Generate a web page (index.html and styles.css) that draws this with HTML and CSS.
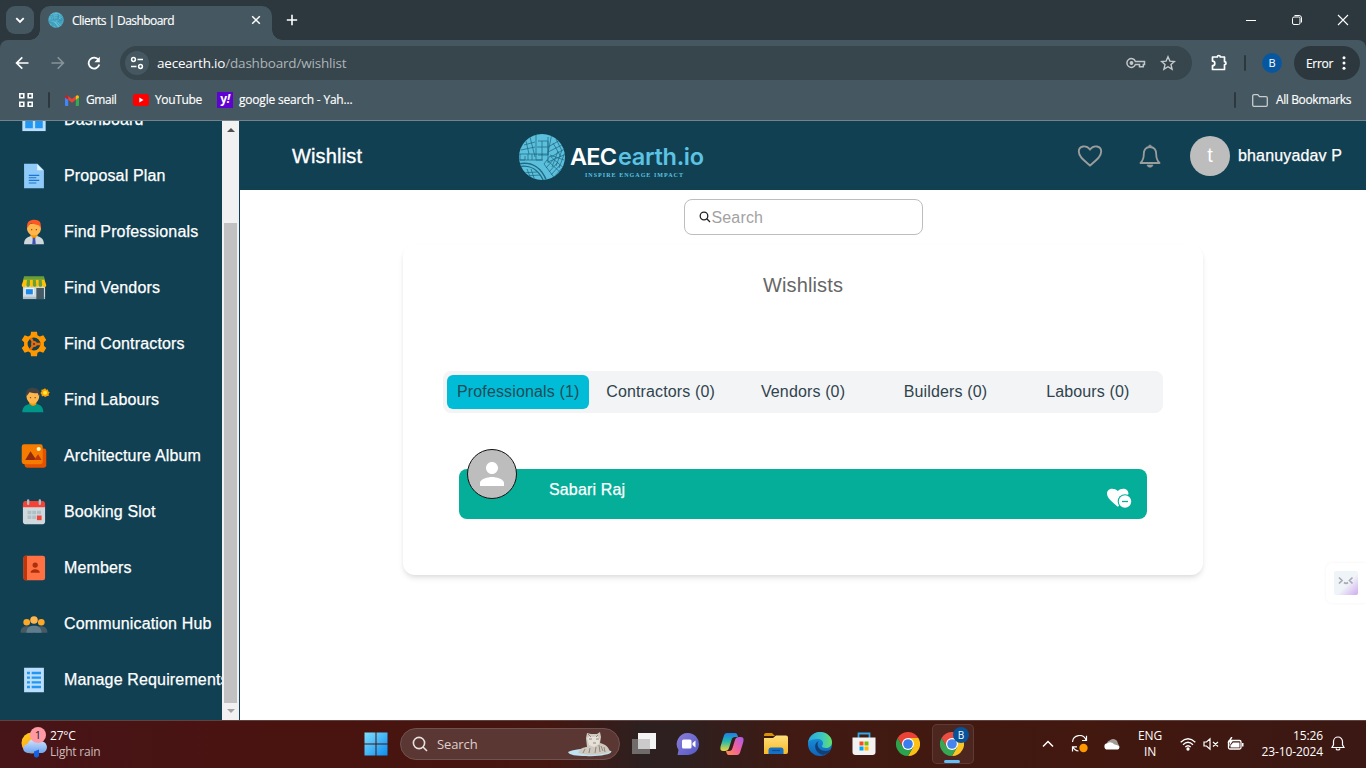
FILE: index.html
```html
<!DOCTYPE html>
<html lang="en">
<head>
<meta charset="utf-8">
<title>Clients | Dashboard</title>
<link rel="stylesheet" href="styles.css">
</head>
<body>
<svg width="0" height="0" class="defs">
  <defs>
    <clipPath id="globe"><circle cx="24" cy="24" r="23"/></clipPath>
    <symbol id="earth" viewBox="0 0 48 48">
      <g clip-path="url(#globe)">
        <rect width="48" height="48" fill="#5cc0dc"/>
        <g stroke="#1f6a84" fill="none" stroke-width=".75">
          <path d="M18 0v22M20 8h10v14H20M24 8v14M30 4v26M12 4l5 20M6 12l11-3M3 17l14-3M19 14h11M1 21h30M2 21v6h5v-4M10 21v6M14 21v6M18 21v6h6v-6M1 27h24M8 8l3 13M34 0l-4 20M30 14l14-8M30 19l18-9M33 24l15-9M30 29l18-8M38 6l6 12M35 10l8 14"/>
          <path d="M0 31c14-3 24 4 29 18M0 34c12-3 21 3 26 15" stroke-width="1.4"/>
          <path d="M26 31l6-8 16 14M28 35l8-9M31 39l9-10M33 42l9-10M36 44l9-10M29 27l15 14M26 31l12 16M4 37l5 7M9 36l4 10M13 36l4 12M3 40l16-1M7 43l15-1M32 22l14 5M40 18l-6 16M44 17l-6 16M47 19l-6 16"/>
        </g>
      </g>
    </symbol>
    <symbol id="chrome" viewBox="0 0 24 24">
      <path d="M12 6h10.4A12 12 0 0 0 1.6 6l5.2 9z" fill="#ea4335"/>
      <path d="M17.2 15 12 24A12 12 0 0 0 22.4 6H12z" fill="#fbc116"/>
      <path d="M6.8 15 1.6 6A12 12 0 0 0 12 24l5.2-9z" fill="#2ba24c"/>
      <circle cx="12" cy="12" r="6" fill="#fff"/><circle cx="12" cy="12" r="4.8" fill="#3b7ded"/>
    </symbol>
    <linearGradient id="win" x1="0" y1="0" x2="1" y2="1"><stop offset="0" stop-color="#7fe0ff"/><stop offset="1" stop-color="#0a8cf0"/></linearGradient>
    <linearGradient id="sun" x1="0" y1="0" x2="1" y2="1"><stop offset="0" stop-color="#ffd21e"/><stop offset="1" stop-color="#ff8a10"/></linearGradient>
    <linearGradient id="cloud" x1="0" y1="0" x2="0" y2="1"><stop offset="0" stop-color="#d3e4fd"/><stop offset="1" stop-color="#6fa5ee"/></linearGradient>
    <linearGradient id="fold" x1="0" y1="0" x2="0" y2="1"><stop offset="0" stop-color="#ffe07a"/><stop offset="1" stop-color="#f8b928"/></linearGradient>
    <linearGradient id="chat" x1="0" y1="0" x2="1" y2="1"><stop offset="0" stop-color="#8b7fd8"/><stop offset="1" stop-color="#5558c8"/></linearGradient>
    <linearGradient id="edgeA" x1="0" y1="0" x2="1" y2="0"><stop offset="0" stop-color="#2aa5dd"/><stop offset=".6" stop-color="#3cc8c0"/><stop offset="1" stop-color="#67df62"/></linearGradient>
    <linearGradient id="edgeB" x1="0" y1="0" x2="0" y2="1"><stop offset="0" stop-color="#1b9de2"/><stop offset="1" stop-color="#0f63b9"/></linearGradient>
    <linearGradient id="copA" x1="0" y1="0" x2="0" y2="1"><stop offset="0" stop-color="#1f7ce8"/><stop offset=".45" stop-color="#20b9b0"/><stop offset="1" stop-color="#f2d638"/></linearGradient>
    <linearGradient id="copB" x1="1" y1="0" x2="0" y2="1"><stop offset="0" stop-color="#a45ef0"/><stop offset=".5" stop-color="#f0609e"/><stop offset="1" stop-color="#ff8f4e"/></linearGradient>
  </defs>
</svg>

<div class="tabstrip">
  <div class="tab-search"><svg width="28" height="28" viewBox="0 0 28 28"><path d="M10.300 12.200l3.700 3.700 3.700-3.700" fill="none" stroke="#fff" stroke-width="1.900"/></svg></div>
  <div class="tab">
    <svg width="16" height="16"><use href="#earth"/></svg>
    <span class="tab-title">Clients | Dashboard</span>
    <svg width="10" height="10" viewBox="0 0 10 10"><path d="M1.200 1.200l7.600 7.600M8.800 1.200l-7.600 7.600" stroke="#fff" stroke-width="1.500"/></svg>
  </div>
  <svg class="new-tab" width="12" height="12" viewBox="0 0 12 12"><path d="M6 .8v10.400M.8 6h10.400" stroke="#fff" stroke-width="1.600"/></svg>
  <div class="win-buttons">
    <svg width="12" height="12" viewBox="0 0 12 12"><path d="M1 6.500h10" stroke="#fff"/></svg>
    <svg width="12" height="12" viewBox="0 0 12 12" fill="none" stroke="#fff"><rect x="1.500" y="3" width="7.500" height="7.500" rx="1.500"/><path d="M3.500 1.500H8a2.500 2.500 0 0 1 2.500 2.500v4.500"/></svg>
    <svg width="12" height="12" viewBox="0 0 12 12"><path d="M1 1l10 10M11 1L1 11" stroke="#fff" stroke-width="1.100"/></svg>
  </div>
</div>

<div class="toolbar-back">
<div class="toolbar">
  <div class="nav">
    <svg width="14" height="14" viewBox="0 0 14 14" fill="none" stroke="#fff" stroke-width="1.700"><path d="M13.500 7H2M7.300 1.300L1.600 7l5.700 5.700"/></svg>
    <svg width="14" height="14" viewBox="0 0 14 14" fill="none" stroke="#87949a" stroke-width="1.600"><path d="M.5 7H12M6.700 1.300L12.400 7l-5.700 5.700"/></svg>
    <svg width="14" height="14" viewBox="0 0 14 14"><path d="M11.500 4A5.400 5.400 0 1 0 12.300 8.500" fill="none" stroke="#fff" stroke-width="1.800"/><path d="M12.800.8v5.400H7.400z" fill="#fff"/></svg>
  </div>
  <div class="omnibox">
    <span class="site-info"><svg width="14" height="14" viewBox="0 0 14 14" fill="none" stroke="#fff" stroke-width="1.500"><circle cx="3.500" cy="3.500" r="1.900"/><path d="M7.500 3.500H13M1 10.500h5.500"/><circle cx="10.500" cy="10.500" r="1.900"/></svg></span>
    <span class="url"><b>aecearth.io</b>/dashboard/wishlist</span>
    <svg width="20" height="12" viewBox="0 0 20 12" fill="none" stroke="#c0c6c9" stroke-width="1.500"><path d="M9.400 4.400A4.400 4.400 0 1 0 9.400 7.600H13.500V9.800h3.800V7.600H18.500V4.400z"/><circle cx="5.500" cy="6" r="1.200" fill="#c0c6c9"/></svg>
    <svg class="star" width="16" height="16" viewBox="0 0 16 16" fill="none" stroke="#c5cbcd" stroke-width="1.400"><path d="M8 1.800l1.900 4.300 4.600.4-3.500 3.100 1.100 4.600L8 11.700l-4.100 2.500L5 9.600 1.500 6.500l4.600-.4z"/></svg>
  </div>
  <svg class="ext" width="18" height="18" viewBox="0 0 18 18" fill="none" stroke="#fff" stroke-width="1.700" stroke-linejoin="round"><path d="M2.500 3h4.800a1.500 1.500 0 0 1 3 0H14.500v4.700a1.500 1.500 0 0 1 0 3V15.500H2.500v-3.800a2.300 2.300 0 0 0 0-4.600z"/></svg>
  <i class="sep"></i>
  <span class="profile">B</span>
  <span class="error">Error<svg width="4" height="14" viewBox="0 0 4 14" fill="#fff"><circle cx="2" cy="1.700" r="1.500"/><circle cx="2" cy="7" r="1.500"/><circle cx="2" cy="12.300" r="1.500"/></svg></span>
</div>
</div>

<div class="bookmarks">
  <svg class="apps" width="14" height="14" viewBox="0 0 14 14" fill="none" stroke="#fff" stroke-width="1.600"><path d="M.8.8h4v4h-4zM9.200.8h4v4h-4zM.8 9.200h4v4h-4zM9.200 9.200h4v4h-4z"/></svg>
  <i class="sep"></i>
  <svg class="gm" width="14" height="11" viewBox="0 0 14 11"><path d="M0 2v8.200c0 .5.400.8.800.8H3.200V4.500z" fill="#4285f4"/><path d="M14 2v8.200c0 .5-.4.800-.8.800H10.800V4.500z" fill="#34a853"/><path d="M3.200 4.800V1L7 4l3.800-3v3.800L7 7.700z" fill="#ea4335"/><path d="M0 2.500C0 .5 1.700-.3 3.200 1v3.800L0 2.500z" fill="#c5221f"/><path d="M14 2.500C14 .5 12.300-.3 10.800 1v3.800L14 2.500z" fill="#fbbc04"/></svg>
  <span class="bm bm-gmail">Gmail</span>
  <svg class="yt" width="16" height="12" viewBox="0 0 16 12"><rect width="16" height="12" rx="2.500" fill="#f00"/><path d="M6.300 3.500v5l4.200-2.500z" fill="#fff"/></svg>
  <span class="bm bm-yt">YouTube</span>
  <span class="yahoo">y<em>!</em></span>
  <span class="bm bm-yahoo">google search - Yah...</span>
  <i class="sep sep-right"></i>
  <svg class="folder" width="16" height="13" viewBox="0 0 16 13" fill="none" stroke="#c6cccf" stroke-width="1.300"><path d="M.7 2A1.300 1.300 0 0 1 2 .7h3.800l1.700 2H14A1.300 1.300 0 0 1 15.300 4v7A1.300 1.300 0 0 1 14 12.300H2A1.300 1.300 0 0 1 .7 11z"/></svg>
  <span class="bm bm-all">All Bookmarks</span>
</div>

<div class="page">
  <nav class="sidebar">
    <div class="menu">
      <a class="item"><svg viewBox="0 0 48 48"><path d="M4 5h40v38H4z" fill="#bbdefb"/><path d="M9 9h13v29H9zM26 9h13v29H26z" fill="#2196f3"/></svg>Dashboard</a>
      <a class="item"><svg viewBox="0 0 48 48"><path d="M41 45H7V3h23l11 11z" fill="#90caf9"/><path d="M39.500 14H29.500V4z" fill="#e1f5fe"/><path d="M15 22h18v2H15zM15 26h13v2H15zM15 30.500h18v2H15zM15 35h13v2H15z" fill="#1976d2"/></svg>Proposal Plan</a>
      <a class="item"><svg viewBox="0 0 48 48"><path d="M18 26h12v9l-6 5-6-5z" fill="#ff9800"/><path d="M12 17c0-10 24-10 24 0 0 17-24 17-24 0z" fill="#ffb74d"/><path d="M13 18C10 6 17 3 25 3c10 0 12 7 10 15l-2-5-14-4-4 4z" fill="#ff5722"/><circle cx="20" cy="20" r="1.200" fill="#784719"/><circle cx="28" cy="20" r="1.200" fill="#784719"/><path d="M7 45c0-9 5-12 12-14l5 7 5-7c7 2 12 5 12 14z" fill="#cfd8dc"/><path d="M22 34h4l1 11h-6z" fill="#3f51b5"/></svg>Find Professionals</a>
      <a class="item"><svg viewBox="0 0 48 48"><path d="M5 18h38v22H5z" fill="#cfd8dc"/><path d="M5 39h38v4H5z" fill="#b0bec5"/><path d="M28 24h13v19H28z" fill="#455a64"/><path d="M8 24h16v12H8z" fill="#e3f2fd"/><path d="M10 26h12v9H10z" fill="#1e88e5"/><path d="M7 4h34l2 7H5z" fill="#689f38"/><path d="M6 10h36l3 9c0 5-7 5-7 0 0 5-7 5-7 0 0 5-7 5-7 0 0 5-7 5-7 0 0 5-7 5-7 0 0 5-7 5-7 0z" fill="#ffc107"/><path d="M12 10h5v9c0 4-6 4-6 0zM22 10h5l1 9c0 4-6 4-6 0zM32 10h5l1 9c0 4-6 4-6 0z" fill="#689f38"/></svg>Find Vendors</a>
      <a class="item"><svg viewBox="0 0 48 48"><path fill-rule="evenodd" d="M19 3h10l1 6 4 2 6-2 5 8-4 4v6l4 4-5 8-6-2-4 2-1 6H19l-1-6-4-2-6 2-5-8 4-4v-6l-4-4 5-8 6 2 4-2zM24 13a11 11 0 1 0 0 22 11 11 0 1 0 0-22z" fill="#ff9800"/><path d="M24 24l-5.500-10M24 24h12M24 24l-6.500 10" stroke="#ef6c00" stroke-width="4"/><circle cx="24" cy="24" r="5" fill="#ef6c00"/><circle cx="24" cy="24" r="1.800" fill="#174150"/></svg>Find Contractors</a>
      <a class="item"><svg viewBox="0 0 48 48"><path d="M16 26h12v10H16z" fill="#ff9800"/><path d="M11 16c0-10 22-10 22 0 0 19-22 19-22 0z" fill="#ffb74d"/><path d="M11 18C9 7 14 3 22 3c10 0 13 6 11 15l-3-6c-8 2-12-2-14-1z" fill="#424242"/><circle cx="18" cy="20" r="1.200" fill="#784719"/><circle cx="26" cy="20" r="1.200" fill="#784719"/><path d="M4 45c0-10 7-13 13-14 3 4 8 4 11 0 6 1 12 4 12 14z" fill="#009688"/><path d="M43 4l2 2.500 3-.5.300 3L51 11l-2 2.500.5 3-3 .5L43 19l-2.500-2-3 .5-.5-3L35 12l2-2.500-.5-3 3-.5z" fill="#ffa000"/><circle cx="43" cy="11.500" r="3.500" fill="#ffeb3b"/></svg>Find Labours</a>
      <a class="item"><svg viewBox="0 0 48 48"><rect x="8" y="11" width="37" height="33" rx="4" fill="#e65100"/><rect x="3" y="4" width="36" height="34" rx="4" fill="#f57c00"/><circle cx="32" cy="12" r="3.500" fill="#fff9c4"/><path d="M9 31l9-15 10 15z" fill="#942a09"/><path d="M24 31l7-10 6 10z" fill="#bf360c"/></svg>Architecture Album</a>
      <a class="item"><svg viewBox="0 0 48 48"><path d="M5 14h38v26c0 3-1 5-4 5H9c-3 0-4-2-4-5z" fill="#cfd8dc"/><path d="M43 16H5V10c0-3 2-5 4-5h30c2 0 4 2 4 5z" fill="#f44336"/><path d="M14 4v6M34 4v6" stroke="#b0bec5" stroke-width="4" stroke-linecap="round"/><path d="M13 22h6.500v6H13zM21 22h6.500v6H21zM29 22h7v6h-7zM13 30h6.500v6H13zM21 30h6.500v6H21z" fill="#b0bec5"/><path d="M29 30h8v8h-8z" fill="#f44336"/></svg>Booking Slot</a>
      <a class="item"><svg viewBox="0 0 48 48"><rect x="6" y="3" width="37" height="42" rx="4" fill="#ff7043"/><path d="M12 3H9c-2 0-3 1-3 4v34c0 3 1 4 3 4h3z" fill="#bf360c"/><circle cx="26" cy="19" r="4.500" fill="#ab300b"/><path d="M18 32c0-8 16-8 16 0z" fill="#ab300b"/></svg>Members</a>
      <a class="item"><svg viewBox="0 0 48 48"><path d="M1 39c0-8 4-11 11-11s10 3 10 11zM26 39c0-8 4-11 10-11s11 3 11 11z" fill="#455a64"/><path d="M11 39c0-9 6-12 13-12s13 3 13 12z" fill="#607d8b"/><circle cx="11.500" cy="21" r="5.700" fill="#ffa726"/><circle cx="36.500" cy="21" r="5.700" fill="#ffa726"/><circle cx="24" cy="17" r="6.500" fill="#ffb74d"/></svg>Communication Hub</a>
      <a class="item"><svg viewBox="0 0 48 48"><path d="M7 3h34v42H7z" fill="#bbdefb"/><path d="M12 10h5v4h-5zM20 10h16v4H20zM12 18h5v4h-5zM20 18h16v4H20zM12 26h5v4h-5zM20 26h16v4H20zM12 34h5v4h-5zM20 34h16v4H20z" fill="#2196f3"/></svg>Manage Requirements</a>
    </div>
    <div class="scrollbar"><i class="up"></i><i class="thumb"></i><i class="down"></i></div>
  </nav>
  <main class="main">
    <header class="header">
      <h1>Wishlist</h1>
      <div class="logo">
        <svg width="48" height="48"><use href="#earth"/></svg>
        <svg class="wordmark" width="138" height="48" viewBox="0 0 138 48"><text x="2" y="32" textLength="47" class="aec">AEC</text><text x="50" y="32" textLength="86" class="earth">earth.io</text><text x="17" y="44" textLength="98" class="tag">INSPIRE ENGAGE IMPACT</text></svg>
      </div>
      <svg class="heart" width="26" height="24" viewBox="0 0 26 24" fill="none" stroke="#9b9c9c" stroke-width="1.900"><path d="M13 21.500C6 15.500 1.800 12.300 1.800 7.600 1.800 2 9 .4 13 5.500 17 .4 24.200 2 24.200 7.600c0 4.700-4.200 7.900-11.200 13.900z"/></svg>
      <svg class="bell" width="22" height="26" viewBox="0 0 22 26"><path d="M1.500 20h19c-3-3-3.300-5.500-3.300-9C17.200 6.800 15 4 11 4s-6.200 2.800-6.200 7c0 3.500-.3 6-3.300 9z" fill="none" stroke="#9b9c9c" stroke-width="1.800" stroke-linejoin="round"/><path d="M9.500 3.500a1.500 1.500 0 0 1 3 0M8 22h6c-.5 3-5.500 3-6 0z" fill="#9b9c9c" stroke="#9b9c9c" stroke-width=".6"/></svg>
      <span class="avatar">t</span>
      <span class="user">bhanuyadav P</span>
    </header>
    <div class="search"><svg width="12" height="12" viewBox="0 0 12 12" fill="none" stroke="#222" stroke-width="1.300"><circle cx="5" cy="5" r="3.800"/><path d="M7.800 7.800L11 11"/></svg><span>Search</span></div>
    <section class="card">
      <h2>Wishlists</h2>
      <div class="tabs"><span class="on">Professionals (1)</span><span>Contractors (0)</span><span>Vendors (0)</span><span>Builders (0)</span><span>Labours (0)</span></div>
      <div class="person">
        <span class="photo"><svg width="36" height="36" viewBox="0 0 24 24" fill="#fff"><path d="M12 12c2.210 0 4-1.790 4-4s-1.790-4-4-4-4 1.790-4 4 1.790 4 4 4zm0 2c-2.670 0-8 1.340-8 4v2h16v-2c0-2.660-5.330-4-8-4z"/></svg></span>
        <span class="name">Sabari Raj</span>
        <svg class="unlike" width="26" height="22" viewBox="0 0 26 22"><path d="M11.500 19.500C5 14 1 11 1 6.600 1 1 8 .2 11.800 4 15.500.2 22.500 1 22.500 7L12 19.800z" fill="#fff"/><circle cx="19" cy="14.500" r="7.300" fill="#04ae99"/><circle cx="19" cy="14.500" r="6.200" fill="#fff"/><path d="M16 14.500h6" stroke="#04ae99" stroke-width="1.300"/></svg>
      </div>
    </section>
    <div class="assistant"><svg width="24" height="24" viewBox="0 0 24 24" fill="none" stroke="#a9a9b4" stroke-width="1.700"><path d="M5 6.500l3 3-3 3M18.500 6.500l-3 3 3 3M10 11.500q2 1.600 4 0"/></svg></div>
  </main>
</div>

<footer class="taskbar">
  <div class="weather">
    <svg width="26" height="32" viewBox="0 0 26 32"><circle cx="11" cy="15" r="10.500" fill="url(#sun)"/><path d="M7 25a4.500 4.500 0 0 1-.5-9 7 7 0 0 1 12-2.500 5.800 5.800 0 0 1 3 11.500z" fill="url(#cloud)"/><path d="M13 23.500l5-2v6a2.500 2.500 0 0 1-5-1z" fill="#1660e6"/></svg>
    <span class="count">1</span>
    <div class="temp">27°C<small>Light rain</small></div>
  </div>
  <svg class="start" width="24" height="24" viewBox="0 0 24 24" fill="url(#win)"><path d="M.5.500h11v11H.5zM12.500.500h11v11h-11zM.5 12.500h11v11H.5zM12.500 12.500h11v11h-11z"/></svg>
  <div class="tsearch">
    <svg width="16" height="16" viewBox="0 0 16 16" fill="none" stroke="#e8e0df" stroke-width="1.600"><circle cx="7" cy="7" r="5.600"/><path d="M11 11l4 4"/></svg>
    <span>Search</span>
    <svg class="tiger" width="44" height="26" viewBox="0 0 44 26"><path d="M0 21c7-3 25-6 43-1 3 3-13 6-25 5-10 0-17-1-18-4z" fill="#bfe3f2"/><path d="M10 22c1-4 6-6 9-6l-1-9 1-5 4 1h6l3-2 1 5-1 6c5 1 9 4 10 9-8 3-23 4-32 1z" fill="#cfc8be"/><path d="M19 7l3-2 3 1 4-1 3 3-1 5-5 3-5-2z" fill="#e6e1d8"/><path d="M20 3l3 3M30 4l-2 2M21 8h3M28 8h3M25 12h3M33 15l2 5M36 16l1 5M28 16l-1 6M22 17l-1 5M17 18l-2 4M31 14l1 7" stroke="#7d7269" stroke-width=".8"/></svg>
  </div>
  <div class="apps-row">
    <span><svg width="24" height="24" viewBox="0 0 24 24"><path d="M6 1h18v16H6z" fill="#f4f4f4"/><path d="M0 7h18v15H0z" fill="#8d8b8b" opacity=".7"/><path d="M6 7h12v10H6z" fill="#cbcbcb"/></svg></span>
    <span><svg width="24" height="24" viewBox="0 0 24 24"><path d="M12 1a11 11 0 1 1-1.500 21.900L1.500 23l1-5A11 11 0 0 1 12 1z" fill="url(#chat)"/><rect x="6" y="7.500" width="9.500" height="9" rx="1.500" fill="#fff"/><path d="M16.500 11l3-2.500v7l-3-2.500z" fill="#fff"/></svg></span>
    <span><svg width="24" height="24" viewBox="0 0 24 24"><path d="M7 1h8c2 0 2.500 2 3 4h-3c-2 0-3 1-3.500 3L9 16c-.5 2-2 3-4 3H3c-3 0-3-3-2-6l2.500-8C4.200 2.500 5 1 7 1z" fill="url(#copA)"/><path d="M17 23H9c-2 0-2.500-2-3-4h3c2 0 3-1 3.500-3L15 8c.5-2 2-3 4-3h2c3 0 3 3 2 6l-2.500 8c-.7 2.500-1.500 4-3.500 4z" fill="url(#copB)"/></svg></span>
    <span><svg width="26" height="24" viewBox="0 0 26 24"><path d="M1 3q0-2 2-2h6l3 3h-11z" fill="#d99208"/><path d="M1 6l9 0 3-2.500h10q2 0 2 2V20q0 2-2 2H1z" fill="url(#fold)"/><path d="M5.500 22v-4q0-2.500 2.500-2.500h10q2.500 0 2.500 2.500v4z" fill="#1671c4"/><path d="M9 18.500h8" stroke="#0d4f94" stroke-width="1.300"/></svg></span>
    <span><svg width="24" height="24" viewBox="0 0 24 24"><circle cx="12" cy="12" r="12" fill="url(#edgeB)"/><path d="M0 11C1 4 6 0 12 0c7 0 12 5 12 10 0 4-3 6-6 6-3 0-4-1-4-2 0-1 1-1 1-3 0-2-2-4-5-4-5 0-9 1-10 4z" fill="url(#edgeA)"/><path d="M22.500 17.800c-6 3-13 0-13-5.800 0-1.500.8-2.500 1.500-3-4.500 1-6 9 1 13 4.500 2.300 9-1 10.500-4.200z" fill="#123f74"/></svg></span>
    <span><svg width="24" height="24" viewBox="0 0 24 24"><path d="M6.500 6V1.500h11V6" fill="none" stroke="#2da9e9" stroke-width="1.800"/><path d="M.5 5.500h23V20q0 3-3 3h-17q-3 0-3-3z" fill="#f3f2f2"/><path d="M7.500 9.500h4v4h-4z" fill="#f25022"/><path d="M12.500 9.500h4v4h-4z" fill="#7fba00"/><path d="M7.500 14.500h4v4h-4z" fill="#00a4ef"/><path d="M12.500 14.500h4v4h-4z" fill="#ffb900"/></svg></span>
    <span><svg width="24" height="24"><use href="#chrome"/></svg></span>
    <span class="active"><svg width="24" height="24"><use href="#chrome"/></svg><b>B</b></span>
  </div>
  <div class="tray">
    <svg class="t-up" width="12" height="12" viewBox="0 0 12 12"><path d="M1 8.500l5-5 5 5" fill="none" stroke="#fff" stroke-width="1.500"/></svg>
    <svg class="t-sync" width="18" height="18" viewBox="0 0 18 18"><path d="M1.500 7A7 7 0 0 1 15 5M15.500.8V5.500H11M1.500 16.500v-4.700H6M2 12a7 7 0 0 0 5.500 4" fill="none" stroke="#fff" stroke-width="1.200"/><circle cx="12.500" cy="13" r="4.200" fill="#ff9800"/></svg>
    <svg class="t-cloud" width="17" height="12" viewBox="0 0 17 12"><path d="M3 8a4 4 0 0 1 2.500-5.500 5 5 0 0 1 8.500 3l2 4z" fill="#a59997"/><path d="M3.500 11.500a3 3 0 0 1 0-6.200 4.600 4.600 0 0 1 6.500 1l4 1.200a2.200 2.200 0 0 1 0 4z" fill="#fff"/></svg>
    <div class="lang">ENG<br>IN</div>
    <svg class="t-wifi" width="16" height="14" viewBox="0 0 16 14" fill="none" stroke="#fff" stroke-width="1.300"><path d="M.7 5.200q7.300-7 14.600 0M3 7.700q5-4.800 10 0M5.300 10q2.700-2.600 5.400 0"/><circle cx="8" cy="12" r="1" fill="#fff"/></svg>
    <svg class="t-vol" width="16" height="14" viewBox="0 0 16 14" fill="none" stroke="#fff" stroke-width="1.200"><path d="M1 5h2.500L7 1.800v10.400L3.500 9H1zM10 5l5 4.500M15 5l-5 4.500"/></svg>
    <svg class="t-bat" width="17" height="14" viewBox="0 0 17 14"><rect x="1.500" y="3.500" width="12.500" height="8.500" rx="1.500" fill="none" stroke="#fff" stroke-width="1.300"/><path d="M3.500 10.500V8.500L6 5.500h6.500v5z" fill="#fff"/><path d="M15 6h1.500v3.500H15zM4 0L.5 5.500H3L2 9.500l4-6H3.800L5.500 0z" fill="#fff"/></svg>
    <div class="clock"><span>15:26</span><span>23-10-2024</span></div>
    <svg class="t-bell" width="14" height="15" viewBox="0 0 14 15" fill="none" stroke="#fff" stroke-width="1.200"><path d="M1 11.500h12l-1.500-2.700V5.500a4.500 4.500 0 0 0-9 0v3.300zM5 12.500c.5 2 3.500 2 4 0"/></svg>
  </div>
</footer>
</body>
</html>
```

FILE: styles.css
```css
* { box-sizing: border-box; }
body { margin: 0; width: 1366px; height: 768px; overflow: hidden; display: flex; flex-direction: column; font-family: "Liberation Sans", Arial, sans-serif; background: #fff; }
svg { flex: none; display: block; }
.defs { position: absolute; }
h1, h2 { margin: 0; font-weight: 400; }

/* browser window */
.tabstrip, .toolbar, .bookmarks, .taskbar { flex: none; font-family: "Open Sans", "Noto Sans", sans-serif; font-size: 12px; color: #fff; display: flex; align-items: center; white-space: nowrap; }
.tabstrip { height: 40px; background: #2d383e; padding-left: 6px; }
.tab-search { width: 28px; height: 28px; border-radius: 9px; background: #455861; }
.tab { position: relative; width: 232px; height: 34px; margin: 6px 0 0 6px; padding: 0 11px 6px 8px; background: #455861; border-radius: 10px 10px 0 0; display: flex; align-items: center; gap: 8px; }
.tab::before, .tab::after { content: ""; position: absolute; bottom: 0; width: 10px; height: 10px; }
.tab::before { left: -10px; background: radial-gradient(circle at 0 0, transparent 9.5px, #455861 10px); }
.tab::after { right: -10px; background: radial-gradient(circle at 100% 0, transparent 9.5px, #455861 10px); }
.tab-title { flex: 1; letter-spacing: -.55px; -webkit-text-stroke: .15px #fff; padding-top: 1px; }
.new-tab { margin-left: 14px; }
.win-buttons { margin-left: auto; display: flex; gap: 34px; padding-right: 17px; }
.toolbar-back { flex: none; background: #2d383e; }
.toolbar { height: 46px; background: #455861; border-radius: 8px 8px 0 0; padding-right: 6px; }
.nav { display: flex; gap: 22px; padding-left: 15px; width: 120px; }
.omnibox { width: 1072px; height: 34px; border-radius: 17px; background: #37454c; display: flex; align-items: center; padding: 0 16px 0 5px; }
.site-info { width: 24px; height: 24px; border-radius: 50%; background: #455861; display: grid; place-items: center; }
.url { flex: 1; margin-left: 8px; font-size: 13.500px; color: #adb5b9; letter-spacing: -.19px; }
.url b { font-weight: 400; color: #fff; }
.star { margin-left: 14px; }
.ext { margin-left: 18px; }
.sep { width: 2px; height: 16px; background: #2d383e; border-radius: 1px; }
.toolbar .sep { margin-left: 16px; }
.profile { width: 20px; height: 20px; margin-left: 16px; border-radius: 50%; background: #0657a0; display: grid; place-items: center; font-size: 11px; line-height: 18px; }
.error { margin-left: 12px; width: 66px; height: 34px; border-radius: 17px; background: #2d383e; display: flex; align-items: center; justify-content: space-between; padding: 0 14px 0 12px; letter-spacing: -.3px; -webkit-text-stroke: .15px #fff; }
.bookmarks { height: 35px; background: #455861; border-bottom: 1px solid #75838a; padding: 0 15px 6px 19px; }
.bookmarks .sep { margin-left: 15px; }
.bm { -webkit-text-stroke: .15px #fff; line-height: 16px; padding-bottom: 1px; }
.gm { margin-left: 15px; }
.yt { margin-left: 16px; }
.bm-gmail { margin-left: 7px; width: 31px; letter-spacing: -.45px; }
.bm-yt { margin-left: 6px; width: 46px; letter-spacing: -.35px; }
.yahoo { margin: 0 6px 0 16px; width: 16px; height: 16px; background: #5f01d1; font: bold 12px/13px "Open Sans", sans-serif; text-align: center; letter-spacing: -.5px; }
.bm-yahoo { letter-spacing: -.2px; }
.bookmarks .sep-right { margin-left: auto; }
.folder { margin: 0 8px 0 16px; }
.bm-all { width: 75px; letter-spacing: -.38px; }

/* page */
.page { height: 599px; display: flex; background: #114053; flex: none; }
.sidebar { width: 240px; display: flex; background: #114053; overflow: hidden; }
.menu { width: 222px; overflow: hidden; flex: none; }
.item { display: flex; align-items: center; gap: 16px; height: 56px; padding: 2px 0 0 20px; font-size: 16px; letter-spacing: .15px; color: #fff; white-space: nowrap; -webkit-text-stroke: .25px #fff; }
.item:first-child { margin-top: -30px; }
.item svg { width: 28px; height: 28px; overflow: visible; }
.scrollbar { width: 17px; background: #f1f1f1; display: flex; flex-direction: column; align-items: center; }
.scrollbar .up, .scrollbar .down { border: 4px solid transparent; height: 0; }
.scrollbar .up { border-top: 0; border-bottom-color: #505050; margin-top: 7px; }
.scrollbar .thumb { width: 13px; height: 480px; margin-top: 91px; background: #c1c1c1; }
.scrollbar .down { border-bottom: 0; border-top-color: #a3a3a3; margin-top: 6px; }
.main { position: relative; width: 1126px; background: #fff; }
.header { height: 69px; background: #114053; color: #fff; display: flex; align-items: center; }
.header h1 { margin-left: 52px; padding-top: 2px; width: 226px; font-size: 20px; letter-spacing: .15px; -webkit-text-stroke: .35px #fff; }
.logo { display: flex; width: 188px; padding-top: 3px; }
.wordmark { overflow: visible; margin-left: 2px; }
.wordmark text { font-family: Inter, "Open Sans", sans-serif; font-weight: 600; font-size: 23.5px; }
.wordmark .aec { fill: #fff; }
.wordmark .earth { fill: #5cc3e2; }
.wordmark .tag { fill: #5cc3e2; font: bold 6px "Liberation Serif", serif; }
.heart { margin-left: 371px; }
.bell { margin-left: 36px; }
.avatar { margin-left: 29px; width: 40px; height: 40px; border-radius: 50%; background: #bdbdbd; display: grid; place-items: center; font-size: 20px; flex: none; }
.user { margin-left: 8px; font-size: 16px; letter-spacing: .15px; -webkit-text-stroke: .25px #fff; white-space: nowrap; }
.search { width: 239px; height: 36px; margin: 9px auto 0; padding-left: 14px; border: 1px solid #bdbdbd; border-radius: 8px; display: flex; align-items: center; gap: 1px; font-size: 16px; letter-spacing: .15px; color: #a2a2a2; }
.search span { padding-top: 2px; }
.card { width: 800px; height: 330px; margin: 10px auto 0; padding: 28px 40px 0; border-radius: 12px; box-shadow: 0 4px 6px -1px rgba(0,0,0,.1), 0 2px 4px -1px rgba(0,0,0,.06); }
.card h2 { height: 24px; line-height: 24px; text-align: center; font-size: 20px; letter-spacing: .15px; color: #666; }
.tabs { display: flex; margin-top: 74px; height: 42px; padding: 4px; border-radius: 8px; background: #f3f4f6; }
.tabs span { flex: 1 1 0; display: grid; place-items: center; font-size: 16px; border-radius: 6px; color: #2f434d; letter-spacing: .14px; white-space: nowrap; }
.tabs .on { background: #00bcd6; color: #214b58; }
.person { position: relative; height: 50px; margin: 56px 16px 0; border-radius: 8px; background: #04ae99; display: flex; justify-content: space-between; padding: 12px 15px 0 90px; color: #fff; font-size: 16px; }
.photo { position: absolute; left: 8px; top: -20px; width: 50px; height: 50px; border: 1px solid #111; border-radius: 50%; background: #bdbdbd; display: grid; place-items: center; }
.name { letter-spacing: .15px; -webkit-text-stroke: .25px #fff; }
.unlike { margin-top: 6px; }
.assistant { position: absolute; right: 0; top: 442px; width: 40px; height: 40px; padding: 8px; border-radius: 6px 0 0 6px; box-shadow: 0 0 3px rgba(0,0,0,.06); background: #fff; }
.assistant svg { border-radius: 2px; background: linear-gradient(135deg, #eff4f8 55%, #cfaaf0); }

/* taskbar */
.taskbar { height: 48px; padding-bottom: 2px; border-top: 1px solid #5f4240; background: linear-gradient(90deg, #471418 0, #49130f 22%, #461610 40%, #2d2020 47%, #2e201f 50%, #401a13 58%, #42180f 80%, #3b1814 100%); }
.weather { position: relative; flex: none; width: 364px; padding-left: 21px; display: flex; align-items: center; gap: 3px; }
.temp { line-height: 16px; letter-spacing: -.2px; }
.temp small { display: block; font-size: 12px; color: #ccbdbb; }
.count { position: absolute; left: 30px; top: -1px; width: 16px; height: 16px; border-radius: 50%; background: #ff9aa5; color: #222; font-size: 11px; line-height: 16px; text-align: center; }
.start { margin-right: -1px; }
.tsearch { flex: none; width: 220px; height: 32px; margin-left: 13px; padding: 0 7px 0 11px; border: 1px solid #705250; border-radius: 16px; background: #5b3733; display: flex; align-items: center; font-size: 13px; color: #ddd0ce; }
.tsearch span { flex: 1; margin-left: 9px; letter-spacing: -.1px; }
.apps-row { display: flex; flex: none; margin-left: 2px; width: 352px; }
.apps-row span { position: relative; width: 44px; height: 40px; display: grid; place-items: center; }
.apps-row .active::before { content: ""; position: absolute; inset: 0 2px; width: 40px; background: rgba(255,255,255,.06); border: 1px solid rgba(255,255,255,.1); border-radius: 5px; }
.apps-row .active::after { content: ""; position: absolute; left: 14px; bottom: 1px; width: 16px; height: 3px; border-radius: 2px; background: #60bef8; }
.apps-row b { position: absolute; left: 23px; top: 3px; width: 16px; height: 16px; border-radius: 50%; background: #07539a; font: 10px/16px "Open Sans", sans-serif; text-align: center; }
.tray { display: flex; align-items: center; flex: none; margin-left: 68px; }
.t-sync { margin-left: 17px; }
.t-cloud { margin-left: 15px; }
.lang { width: 42px; margin-left: 8px; text-align: center; line-height: 16px; letter-spacing: -.2px; }
.t-wifi { margin-left: 9px; }
.t-vol { margin-left: 7px; }
.t-bat { margin-left: 8px; }
.clock { width: 79px; display: flex; flex-direction: column; align-items: flex-end; line-height: 16px; letter-spacing: -.1px; }
.t-bell { margin-left: 8px; }
```
